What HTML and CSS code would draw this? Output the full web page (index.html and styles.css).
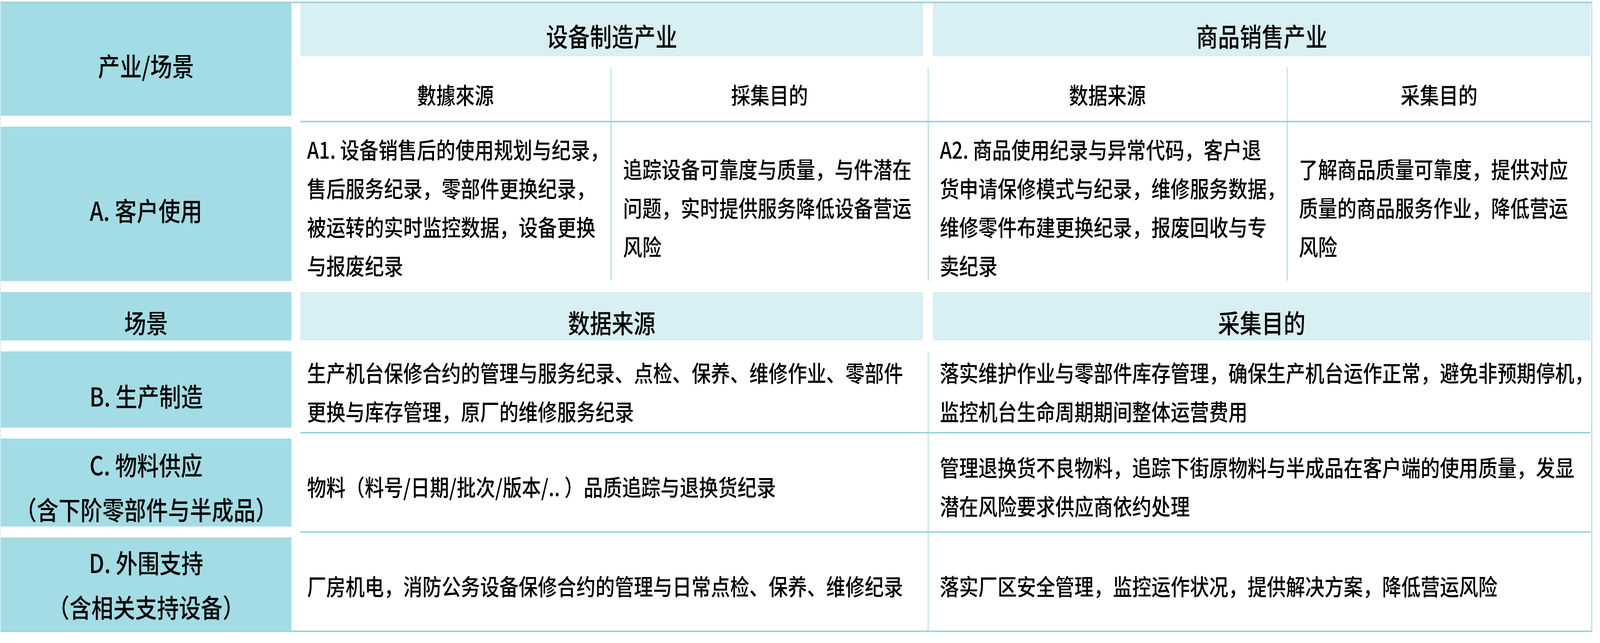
FILE: index.html
```html
<!DOCTYPE html>
<html lang="zh-CN">
<head>
<meta charset="utf-8">
<title>产业/场景 数据来源与采集目的</title>
<link rel="stylesheet" href="styles.css">
</head>
<body>
<div class="table">
  <div class="labels">
    <div class="label l-top"><div class="t">产业/场景</div></div>
    <div class="label l-a"><div class="t">A. 客户使用</div></div>
    <div class="label l-scene"><div class="t">场景</div></div>
    <div class="label l-b"><div class="t">B. 生产制造</div></div>
    <div class="label l-c"><div class="t">C. 物料供应<br>（含下阶零部件与半成品）</div></div>
    <div class="label l-d"><div class="t">D. 外围支持<br>（含相关支持设备）</div></div>
  </div>
  <div class="data">
    <div class="row head head-top">
      <div class="hcell left"><div class="t">设备制造产业</div></div>
      <div class="hcell right"><div class="t">商品销售产业</div></div>
    </div>
    <div class="row sub">
      <div class="scell"><div class="t">數據來源</div></div>
      <div class="scell vl"><div class="t">採集目的</div></div>
      <div class="scell vl"><div class="t">数据来源</div></div>
      <div class="scell vl"><div class="t">采集目的</div></div>
    </div>
    <div class="row four row-a">
      <div class="cell c2"><div class="t tl">A1. 设备销售后的使用规划与纪录，<br>售后服务纪录，零部件更换纪录，<br>被运转的实时监控数据，设备更换<br>与报废纪录</div></div>
      <div class="cell cx"><div class="t tl">追踪设备可靠度与质量，与件潜在<br>问题，实时提供服务降低设备营运<br>风险</div></div>
      <div class="cell cx"><div class="t tl">A2. 商品使用纪录与异常代码，客户退<br>货申请保修模式与纪录，维修服务数据，<br>维修零件布建更换纪录，报废回收与专<br>卖纪录</div></div>
      <div class="cell cx"><div class="t tl">了解商品质量可靠度，提供对应<br>质量的商品服务作业，降低营运<br>风险</div></div>
    </div>
    <div class="row head head-scene">
      <div class="hcell left"><div class="t">数据来源</div></div>
      <div class="hcell right"><div class="t">采集目的</div></div>
    </div>
    <div class="row two row-b">
      <div class="cell wl"><div class="t tl">生产机台保修合约的管理与服务纪录、点检、保养、维修作业、零部件<br>更换与库存管理，原厂的维修服务纪录</div></div>
      <div class="cell wr"><div class="t tl">落实维护作业与零部件库存管理，确保生产机台运作正常，避免非预期停机，<br>监控机台生命周期期间整体运营费用</div></div>
    </div>
    <div class="row two row-c">
      <div class="cell wl"><div class="t tl">物料（料号/日期/批次/版本/.. ）品质追踪与退换货纪录</div></div>
      <div class="cell wr"><div class="t tl">管理退换货不良物料，追踪下街原物料与半成品在客户端的使用质量，发显<br>潜在风险要求供应商依约处理</div></div>
    </div>
    <div class="row two row-d">
      <div class="cell wl"><div class="t tl">厂房机电，消防公务设备保修合约的管理与日常点检、保养、维修纪录</div></div>
      <div class="cell wr"><div class="t tl">落实厂区安全管理，监控运作状况，提供解决方案，降低营运风险</div></div>
    </div>
  </div>
</div>
</body>
</html>
```

FILE: styles.css
```css
:root {
  /* one reference pixel, horizontally and vertically */
  --u: calc(100vw / 4826);
  --v: calc(100vh / 1645);
  --fs: calc(58 * var(--u));
  --fs-big: calc(66 * var(--u));
  --r: 1;
  --dark: #a3dce5;
  --light: #d8eff3;
  --line: #9ad4dd;
  --vline: #a6dae1;
  --edge: #b6e2e8;
}

/* where lengths can be divided, keep the glyphs' reference proportions */
@supports (scale: calc(100vw / 4826px)) {
  :root {
    --fs: calc(58 * var(--v));
    --fs-big: calc(66 * var(--v));
    --r: calc((100vw * 1645) / (100vh * 4826));
  }
  .t {
    transform: scaleX(var(--r));
  }
}

html, body {
  margin: 0;
  padding: 0;
  background: #ffffff;
  overflow: hidden;
}

.table {
  margin: calc(4 * var(--v)) 0 0 calc(1 * var(--u));
  width: calc(4801 * var(--u));
  box-sizing: border-box;
  border-top: calc(4 * var(--v)) solid var(--line);
  border-bottom: calc(4 * var(--v)) solid var(--line);
  border-left: calc(2 * var(--u)) solid var(--edge);
  border-right: calc(3 * var(--u)) solid var(--line);
  display: flex;
  font-family: "Noto Sans CJK SC", "Noto Sans", sans-serif;
  color: #000000;
  font-weight: 500;
}

.t {
  flex: none;
  transform-origin: center center;
}

.t.tl {
  transform-origin: left center;
}

/* label column */
.labels {
  width: calc(877 * var(--u));
  flex: none;
  display: flex;
  flex-direction: column;
}

.label {
  box-sizing: border-box;
  display: flex;
  align-items: center;
  justify-content: center;
  text-align: center;
  font-size: var(--fs-big);
  line-height: calc(114 * var(--v));
  white-space: nowrap;
  background: linear-gradient(to bottom, var(--dark) calc(100% - 28 * var(--v)), transparent calc(100% - 28 * var(--v)));
}

.l-top { height: calc(316 * var(--v)); }
.l-a { height: calc(423 * var(--v)); }
.l-scene { height: calc(152 * var(--v)); }
.l-b { height: calc(223 * var(--v)); }
.l-c { height: calc(253 * var(--v)); padding-bottom: calc(10 * var(--v)); }
.l-d { height: calc(238 * var(--v)); background: var(--dark); }

/* data area */
.data {
  width: calc(3892 * var(--u));
  flex: none;
  margin-left: calc(27 * var(--u));
  display: flex;
  flex-direction: column;
}

.row {
  display: grid;
  box-sizing: border-box;
}

.head {
  grid-template-columns: calc(1892 * var(--u)) calc(2000 * var(--u));
}

.head-top { height: calc(164 * var(--v)); }
.head-scene { height: calc(152 * var(--v)); }

.hcell {
  display: flex;
  align-items: center;
  justify-content: center;
  font-size: var(--fs-big);
  white-space: nowrap;
  min-width: 0;
  background: linear-gradient(to bottom, var(--light) calc(100% - 28 * var(--v)), transparent calc(100% - 28 * var(--v)));
}

.hcell.left { margin-right: calc(14 * var(--u)); }
.hcell.right { margin-left: calc(16 * var(--u)); }

.sub {
  height: calc(141 * var(--v));
  grid-template-columns: calc(936 * var(--u)) calc(956 * var(--u)) calc(1083 * var(--u)) calc(917 * var(--u));
  border-bottom: calc(4 * var(--v)) solid var(--line);
}

.scell {
  display: flex;
  align-items: center;
  justify-content: center;
  font-size: var(--fs);
  white-space: nowrap;
  min-width: 0;
}

.scell.vl { border-left: calc(3 * var(--u)) solid var(--vline); }

.four {
  grid-template-columns: calc(936 * var(--u)) calc(956 * var(--u)) calc(1083 * var(--u)) calc(917 * var(--u));
}

.two {
  grid-template-columns: calc(1892 * var(--u)) calc(2000 * var(--u));
}

.cell {
  box-sizing: border-box;
  display: flex;
  align-items: center;
  font-size: var(--fs);
  line-height: calc(99 * var(--v));
  white-space: nowrap;
  min-width: 0;
}

.row-a { height: calc(434 * var(--v)); }

.row-a .c2 { padding-left: calc(20 * var(--u)); }

.row-a .cx {
  padding-left: calc(37 * var(--u));
  background: linear-gradient(var(--vline), var(--vline)) no-repeat 0 0 / calc(3 * var(--u)) calc(100% - 29 * var(--v));
}

.row-b { height: calc(210 * var(--v)); border-bottom: calc(4 * var(--v)) solid var(--line); }
.row-c { height: calc(254 * var(--v)); border-bottom: calc(4 * var(--v)) solid var(--line); }
.row-d { height: calc(250 * var(--v)); }

.row-c .cell, .row-d .cell { padding-top: calc(20 * var(--v)); }

.wl { padding-left: calc(20 * var(--u)); }

.wr {
  padding-left: calc(34 * var(--u));
  border-left: calc(3 * var(--u)) solid var(--vline);
}
```
